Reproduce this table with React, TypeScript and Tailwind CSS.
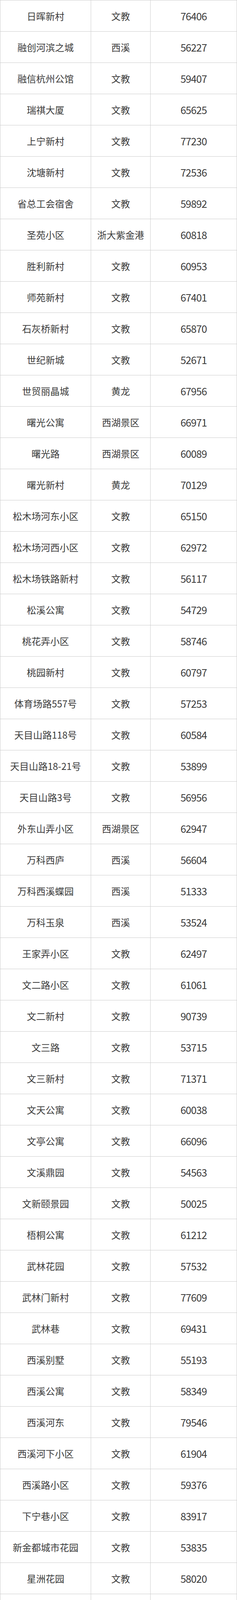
const rows: [string, string, string][] = [
  ["日晖新村", "文教", "76406"],
  ["融创河滨之城", "西溪", "56227"],
  ["融信杭州公馆", "文教", "59407"],
  ["瑞祺大厦", "文教", "65625"],
  ["上宁新村", "文教", "77230"],
  ["沈塘新村", "文教", "72536"],
  ["省总工会宿舍", "文教", "59892"],
  ["圣苑小区", "浙大紫金港", "60818"],
  ["胜利新村", "文教", "60953"],
  ["师苑新村", "文教", "67401"],
  ["石灰桥新村", "文教", "65870"],
  ["世纪新城", "文教", "52671"],
  ["世贸丽晶城", "黄龙", "67956"],
  ["曙光公寓", "西湖景区", "66971"],
  ["曙光路", "西湖景区", "60089"],
  ["曙光新村", "黄龙", "70129"],
  ["松木场河东小区", "文教", "65150"],
  ["松木场河西小区", "文教", "62972"],
  ["松木场铁路新村", "文教", "56117"],
  ["松溪公寓", "文教", "54729"],
  ["桃花弄小区", "文教", "58746"],
  ["桃园新村", "文教", "60797"],
  ["体育场路557号", "文教", "57253"],
  ["天目山路118号", "文教", "60584"],
  ["天目山路18-21号", "文教", "53899"],
  ["天目山路3号", "文教", "56956"],
  ["外东山弄小区", "西湖景区", "62947"],
  ["万科西庐", "西溪", "56604"],
  ["万科西溪蝶园", "西溪", "51333"],
  ["万科玉泉", "西溪", "53524"],
  ["王家弄小区", "文教", "62497"],
  ["文二路小区", "文教", "61061"],
  ["文二新村", "文教", "90739"],
  ["文三路", "文教", "53715"],
  ["文三新村", "文教", "71371"],
  ["文天公寓", "文教", "60038"],
  ["文亭公寓", "文教", "66096"],
  ["文溪鼎园", "文教", "54563"],
  ["文新颐景园", "文教", "50025"],
  ["梧桐公寓", "文教", "61212"],
  ["武林花园", "文教", "57532"],
  ["武林门新村", "文教", "77609"],
  ["武林巷", "文教", "69431"],
  ["西溪别墅", "文教", "55193"],
  ["西溪公寓", "文教", "58349"],
  ["西溪河东", "文教", "79546"],
  ["西溪河下小区", "文教", "61904"],
  ["西溪路小区", "文教", "59376"],
  ["下宁巷小区", "文教", "83917"],
  ["新金都城市花园", "文教", "53835"],
  ["星洲花园", "文教", "58020"],
  ["学院路", "文教", "57738"],
  ["雅戈尔御西湖", "文教", "73723"],
  ["雅仕苑", "文教", "52059"],
  ["沿山河村", "黄龙", "61355"],
  ["阳光地带花园", "文教", "54520"],
  ["窑背巷小区", "文教", "61461"],
  ["耀江文萃苑", "文教", "59679"],
  ["耀江文鼎苑", "浙大紫金港", "68205"],
  ["耀江文欣苑", "文教", "56839"],
  ["银马公寓", "文教", "67916"],
  ["邮电新村", "文教", "73641"],
  ["友谊新村", "黄龙", "60601"],
  ["玉古路小区", "黄龙", "61266"],
  ["玉泉大厦", "黄龙", "51017"],
  ["浙大新村", "西湖景区", "66740"],
  ["政新花园", "文教", "53810"],
  ["中大文锦苑", "文教", "74015"],
  ["中海西溪华府", "西溪", "55531"],
  ["中豪晴园", "文教", "60017"],
  ["紫荆欣苑", "文教", "63696"],
  ["紫林公寓", "文教", "53693"],
  ["景月湾", "之江", "50470"],
  ["绿城九溪玫瑰园", "之江", "91161"],
  ["西湖高尔夫别墅", "之江", "63166"],
  ["西湖美庐公馆", "之江", "55066"],
  ["祥生云溪新语", "之江", "53913"],
  ["阳明谷", "之江", "74194"],
  ["云栖蝶谷", "之江", "63097"],
];

const cell =
  "h-[80px] flex items-center justify-center border-r border-b border-[#cccccc]";

export default function App() {
  return (
    <div
      className="w-full bg-white text-[24px] leading-none text-[#3b3b3b]"
      style={{ fontFamily: '"Noto Sans CJK SC", "Noto Sans", sans-serif' }}
    >
      <div className="grid grid-cols-[232px_152px_1fr] border-t border-l border-[#cccccc]">
        {rows.map(([name, area, price]) => (
          <div key={name} className="contents">
            <div className={cell}>{name}</div>
            <div className={cell}>{area}</div>
            <div className={`${cell} text-[26px] tracking-[-1px]`}>{price}</div>
          </div>
        ))}
      </div>
    </div>
  );
}
